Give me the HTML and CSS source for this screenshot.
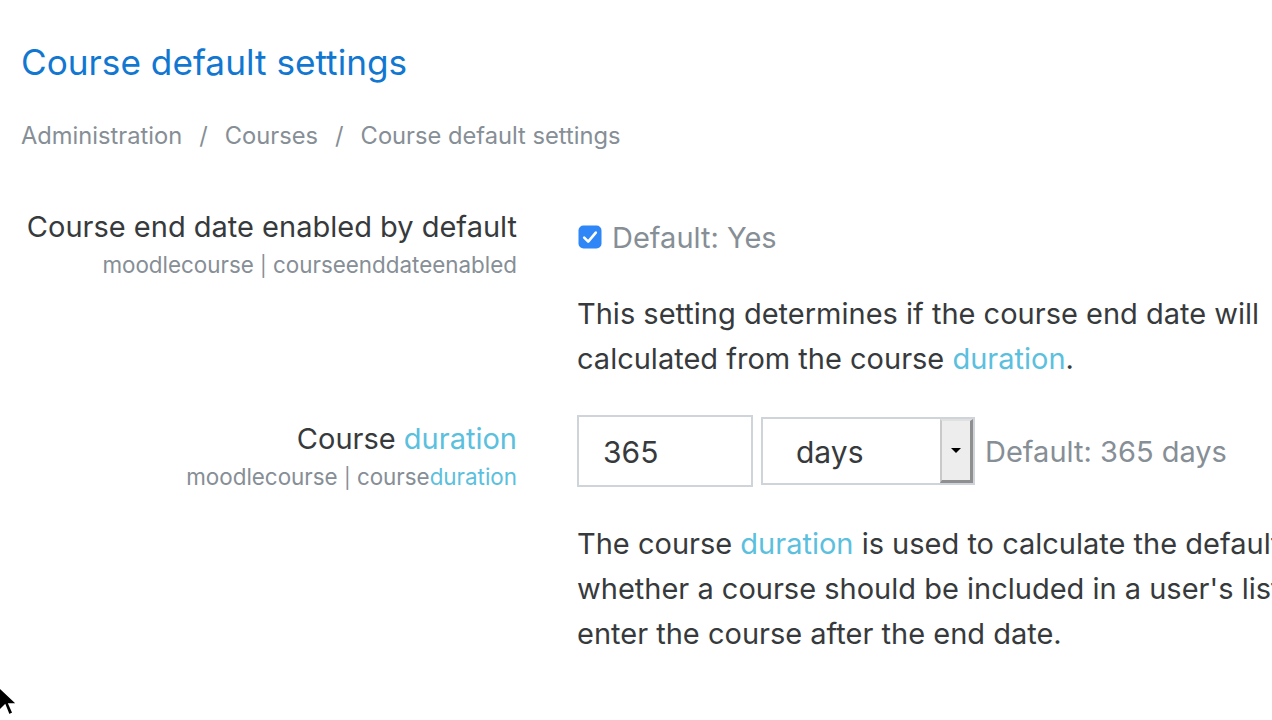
FILE: index.html
```html
<!DOCTYPE html>
<html lang="en">
<head>
<meta charset="utf-8">
<title>Course default settings</title>
<link rel="stylesheet" href="styles.css">
</head>
<body>
<div class="page">
  <h1 class="page-title">Course default settings</h1>
  <nav class="breadcrumb">
    <span class="crumb">Administration</span><span class="sep">/</span><span class="crumb">Courses</span><span class="sep">/</span><span class="crumb">Course default settings</span>
  </nav>

  <div class="setting">
    <div class="label-col">
      <div class="label">Course end date enabled by default</div>
      <div class="shortname">moodlecourse <span class="pipe">|</span> courseenddateenabled</div>
    </div>
    <div class="field-col">
      <div class="control-row check-row">
        <span class="checkbox">
          <svg viewBox="0 0 24 24" width="24" height="24"><rect x="0.5" y="0.5" width="23" height="23" rx="5" fill="#2f86f6"/><path d="M6.2 12.6 L10.2 16.6 L17.8 7.6" fill="none" stroke="#fff" stroke-width="2.6" stroke-linecap="round" stroke-linejoin="round"/></svg>
        </span>
        <span class="default">Default: Yes</span>
      </div>
      <p class="desc desc-first">This setting determines if the course end date will<br>calculated from the course <span class="hl">duration</span>.</p>
    </div>
  </div>

  <div class="setting second">
    <div class="label-col">
      <div class="label">Course <span class="hl">duration</span></div>
      <div class="shortname">moodlecourse <span class="pipe">|</span> course<span class="hl">duration</span></div>
    </div>
    <div class="field-col">
      <div class="control-row">
        <div class="text-input">365</div>
        <div class="select"><span class="select-value">days</span><span class="select-btn"><span class="arrow"></span></span></div>
        <span class="default">Default: 365 days</span>
      </div>
      <p class="desc desc-second">The course <span class="hl">duration</span> is used to calculate the default course end date and<br>whether a course should be included in a user's list of courses, even if they can<br>enter the course after the end date.</p>
    </div>
  </div>
</div>
<svg class="cursor" viewBox="0 0 24 34" width="24" height="34"><path d="M1 1 L1 25 L7 19 L11 29 L15 27 L11 18 L19 18 Z" fill="#000" stroke="#fff" stroke-width="1.5"/></svg>
</body>
</html>
```
FILE: styles.css
```css
html, body {
  margin: 0;
  padding: 0;
  background: #fff;
  overflow: hidden;
  width: 1272px;
  height: 720px;
}
body {
  font-family: Inter, "Noto Sans", sans-serif;
  color: #373a3c;
  position: relative;
}
.page {
  padding: 38px 0 0 21px;
  width: 1600px;
}
.page-title {
  margin: 0;
  font-size: 35.2px;
  font-weight: 400;
  line-height: 48px;
  color: #1177d1;
}
.breadcrumb {
  margin-top: 32px;
  font-size: 23.7px;
  line-height: 36px;
  color: #868e96;
  display: flex;
}
.sep {
  padding: 0 17px;
}
.setting {
  display: grid;
  grid-template-columns: 496px 1fr;
  column-gap: 60px;
  margin-top: 49px;
}
.setting.second {
  margin-top: 34px;
}
.label-col {
  text-align: right;
}
.label {
  font-size: 29px;
  line-height: 48px;
}
.shortname {
  font-size: 22.4px;
  line-height: 28px;
  color: #868e96;
}
.pipe {
  font-size: 20px;
}
.hl {
  color: #5bc0de;
}
.control-row {
  display: flex;
  align-items: center;
  height: 72px;
}
.check-row {
  height: 68px;
}
.checkbox {
  width: 24px;
  height: 24px;
  margin: 0 10px 0 1px;
  display: flex;
}
.default {
  font-size: 29px;
  color: #868e96;
}
.desc {
  margin: 20px 0 0;
  font-size: 29px;
  line-height: 45px;
  white-space: nowrap;
}
.desc-second {
  margin-top: 34px;
}
.text-input {
  box-sizing: border-box;
  width: 176px;
  height: 72px;
  border: 2px solid #ced4da;
  padding: 2px 0 0 24px;
  font-size: 30px;
  display: flex;
  align-items: center;
  margin-right: 8px;
}
.select {
  box-sizing: border-box;
  width: 214px;
  height: 68px;
  border: 2px solid #ced4da;
  display: flex;
  margin-right: 10px;
}
.select-value {
  flex: 1;
  padding: 2px 0 0 33px;
  font-size: 30px;
  display: flex;
  align-items: center;
}
.select-btn {
  width: 28px;
  background: #ededed;
  border-left: 2px solid #c9c9c9;
  border-top: 2px solid #e0e0e0;
  border-right: 3px solid #8f8f8f;
  border-bottom: 3px solid #8f8f8f;
  display: flex;
  align-items: center;
  justify-content: center;
}
.arrow {
  width: 0;
  height: 0;
  border-left: 5px solid transparent;
  border-right: 5px solid transparent;
  border-top: 5px solid #000;
}
.cursor {
  position: absolute;
  left: -2px;
  top: 686px;
}
```
